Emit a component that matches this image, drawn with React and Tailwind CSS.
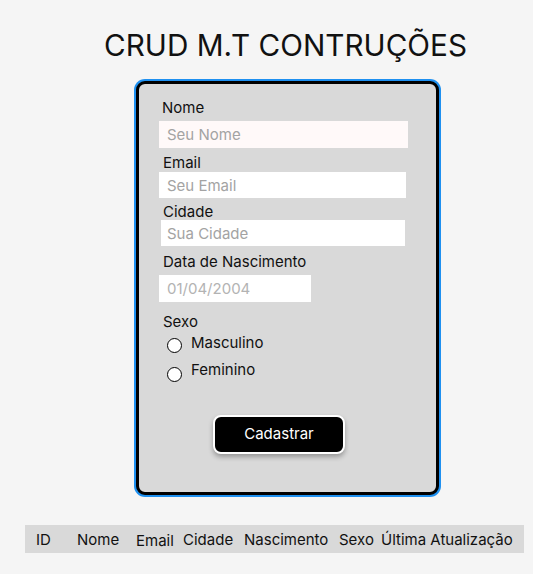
export default function App() {
  const font = { fontFamily: 'Inter, "Noto Sans", sans-serif' };
  const columns = [
    { label: 'ID', w: 'w-[41px]' },
    { label: 'Nome', w: 'w-[59px]' },
    { label: 'Email', w: 'w-[47px]', low: true },
    { label: 'Cidade', w: 'w-[61px]' },
    { label: 'Nascimento', w: 'w-[95px]' },
    { label: 'Sexo', w: 'w-[42px]' },
    { label: 'Última Atualização', w: 'flex-1' },
  ];

  return (
    <div className="min-h-screen bg-[#f5f5f5] text-[#111] overflow-hidden" style={font}>
      <h1 className="ml-[104px] pt-[28px] text-[29.7px] leading-[34px] font-normal">
        CRUD M.T CONTRUÇÕES
      </h1>

      {/* Form card */}
      <div className="ml-[136px] mt-[19px] w-[303px] h-[414px] rounded-[9px] border-[3px] border-black bg-[#d9d9d9] ring-2 ring-[#1e90f0]">
        <form className="flex flex-col pl-[20px] pt-[15px] text-[15px]" onSubmit={(e) => e.preventDefault()}>
          <label className="ml-[3px] leading-[18px]">Nome</label>
          <input
            className="mt-[4px] h-[27px] w-[249px] bg-[#fff9f9] px-[8px] text-[15px] outline-none placeholder:text-[#a3a3a3]"
            placeholder="Seu Nome"
          />

          <label className="ml-[4px] mt-[6px] leading-[18px]">Email</label>
          <input
            className="h-[26px] w-[247px] bg-white px-[8px] text-[15px] outline-none placeholder:text-[#a3a3a3]"
            placeholder="Seu Email"
          />

          <label className="ml-[4px] mt-[5px] leading-[18px]">Cidade</label>
          <input
            className="ml-[2px] mt-[-1px] h-[26px] w-[244px] bg-white px-[6px] text-[15px] outline-none placeholder:text-[#a3a3a3]"
            placeholder="Sua Cidade"
          />

          <label className="ml-[4px] mt-[7px] leading-[18px]">Data de Nascimento</label>
          <input
            className="mt-[4px] h-[27px] w-[152px] bg-white px-[8px] text-[15px] outline-none placeholder:text-[#b3b3b3]"
            placeholder="01/04/2004"
          />

          <span className="ml-[4px] mt-[11px] leading-[18px]">Sexo</span>
          <label className="ml-[8px] mt-[3px] flex h-[18px] items-start gap-[9px] leading-[18px]">
            <input
              type="radio"
              name="sexo"
              className="mt-[4px] h-[15px] w-[15px] shrink-0 appearance-none rounded-full border-[1.5px] border-black bg-white"
            />
            Masculino
          </label>
          <label className="ml-[8px] mt-[9px] flex h-[18px] items-start gap-[9px] leading-[18px]">
            <input
              type="radio"
              name="sexo"
              className="mt-[6px] h-[15px] w-[15px] shrink-0 appearance-none rounded-full border-[1.5px] border-black bg-white"
            />
            Feminino
          </label>

          <button
            type="submit"
            className="ml-[54px] mt-[36px] h-[39px] w-[132px] rounded-[8px] border-2 border-white bg-black text-[15px] text-white shadow-[0_3px_5px_rgba(0,0,0,0.3)]"
          >
            Cadastrar
          </button>
        </form>
      </div>

      {/* Table header */}
      <div className="ml-[25px] mt-[30px] flex h-[28px] w-[499px] items-start bg-[#d9d9d9] pl-[11px] pt-[6px] text-[15px] leading-[18px]">
        {columns.map((c) => (
          <span key={c.label} className={`${c.w} whitespace-nowrap ${c.low ? 'mt-[1px]' : ''}`}>
            {c.label}
          </span>
        ))}
      </div>
    </div>
  );
}
